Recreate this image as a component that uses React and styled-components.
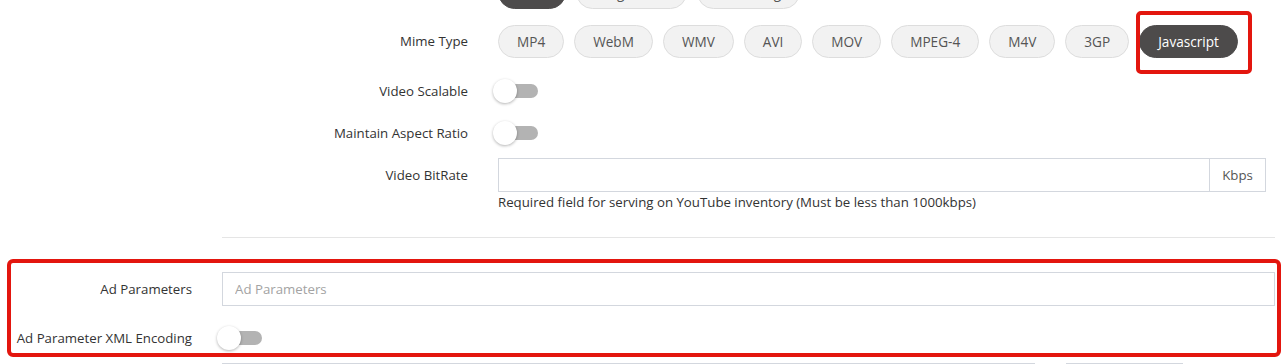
import React from 'react';
import styled, { createGlobalStyle } from 'styled-components';

const GlobalStyle = createGlobalStyle`
  body {
    margin: 0;
    background: #fff;
    font-family: "Open Sans", "Liberation Sans", sans-serif;
    font-size: 13.25px;
    color: #333;
    overflow: hidden;
  }
  * { box-sizing: border-box; }
`;

const Page = styled.div`
  margin-top: -24px;
  padding-right: 7px;
`;

const Row = styled.div`
  display: grid;
  grid-template-columns: ${p => p.$labelWidth || 192}px minmax(0, 1fr);
  column-gap: 30px;
  align-items: start;
  margin-bottom: ${p => (p.$mb === undefined ? 8 : p.$mb)}px;
  & > * { min-width: 0; }
`;

const Label = styled.div`
  text-align: right;
  line-height: ${p => p.$h || 34}px;
  white-space: nowrap;
  color: #333;
`;

const Nested = styled.div`
  padding-right: 9px;
`;

const Pills = styled.div`
  display: flex;
  flex-wrap: wrap;
  gap: 10px;
`;

const PillWrap = styled.span`
  position: relative;
  display: inline-flex;
`;

const Pill = styled.button`
  height: 33px;
  padding: 0 18px;
  border-radius: 17px;
  border: 1px solid ${p => (p.$active ? '#4d4b4b' : '#dddddd')};
  background: ${p => (p.$active ? '#4d4b4b' : '#f2f2f2')};
  color: ${p => (p.$active ? '#fff' : '#555')};
  font-family: inherit;
  font-size: 13.6px;
  cursor: pointer;
`;

const Highlight = styled.div`
  position: absolute;
  top: ${p => p.$t}px;
  left: ${p => p.$l}px;
  right: ${p => p.$r}px;
  bottom: ${p => p.$b}px;
  border: 4px solid #e3160e;
  border-radius: ${p => p.$radius || 5}px;
  pointer-events: none;
`;

const ToggleCell = styled.div`
  height: 34px;
  display: flex;
  align-items: center;
`;

const Toggle = styled.span`
  position: relative;
  display: inline-block;
  width: 45px;
  height: 24px;
  margin-left: -5px;
`;

const Track = styled.span`
  position: absolute;
  left: 12px;
  right: 0;
  top: 5px;
  height: 14px;
  border-radius: 7px;
  background: #b3b3b3;
`;

const Knob = styled.span`
  position: absolute;
  left: 0;
  top: 0;
  width: 24px;
  height: 24px;
  border-radius: 50%;
  background: #fff;
  box-shadow: 0 1px 3px rgba(0, 0, 0, 0.3);
`;

const InputGroup = styled.div`
  display: flex;
  width: 100%;
  height: 34px;
  border: 1px solid #d3d7de;
  background: #fff;
`;

const TextInput = styled.input`
  flex: 1;
  min-width: 0;
  width: 0;
  border: none;
  outline: none;
  padding: 0 12px;
  font-family: inherit;
  font-size: 13.25px;
  color: #333;
  background: transparent;
  &::placeholder { color: #a3a3a3; }
`;

const Addon = styled.span`
  flex: 0 0 56px;
  border-left: 1px solid #d3d7de;
  display: flex;
  align-items: center;
  justify-content: center;
  color: #555;
`;

const Help = styled.div`
  line-height: 20px;
  color: #333;
`;

const Divider = styled.hr`
  border: none;
  border-top: 1px solid #e5e5e5;
  margin: 25px -9px 34px 0;
`;

const Marked = styled.div`
  position: relative;
`;

const SplitInputs = styled.div`
  display: grid;
  grid-template-columns: 813px 117px;
  column-gap: 31px;
`;

const Switch = () => (
  <ToggleCell>
    <Toggle>
      <Track />
      <Knob />
    </Toggle>
  </ToggleCell>
);

const deliveryTypes = ['Both', 'Progressive', 'Streaming'];
const mimeTypes = ['MP4', 'WebM', 'WMV', 'AVI', 'MOV', 'MPEG-4', 'M4V', '3GP', 'Javascript'];

export default function App() {
  return (
    <>
      <GlobalStyle />
      <Page>
        <Row $mb={0}>
          <div />
          <Nested>
            <Row $labelWidth={246} $mb={16}>
              <Label $h={33}>Delivery Type</Label>
              <Pills>
                {deliveryTypes.map((t, i) => (
                  <Pill key={t} $active={i === 0}>{t}</Pill>
                ))}
              </Pills>
            </Row>
            <Row $labelWidth={246} $mb={16}>
              <Label $h={33}>Mime Type</Label>
              <Pills>
                {mimeTypes.map(t =>
                  t === 'Javascript' ? (
                    <PillWrap key={t}>
                      <Pill $active>{t}</Pill>
                      <Highlight $t={-14} $l={-3} $r={-14} $b={-16} />
                    </PillWrap>
                  ) : (
                    <Pill key={t}>{t}</Pill>
                  )
                )}
              </Pills>
            </Row>
            <Row $labelWidth={246}>
              <Label>Video Scalable</Label>
              <Switch />
            </Row>
            <Row $labelWidth={246}>
              <Label>Maintain Aspect Ratio</Label>
              <Switch />
            </Row>
            <Row $labelWidth={246} $mb={0}>
              <Label>Video BitRate</Label>
              <div>
                <InputGroup>
                  <TextInput />
                  <Addon>Kbps</Addon>
                </InputGroup>
                <Help>Required field for serving on YouTube inventory (Must be less than 1000kbps)</Help>
              </div>
            </Row>
            <Divider />
          </Nested>
        </Row>

        <Marked>
          <Row $mb={15}>
            <Label>Ad Parameters</Label>
            <InputGroup>
              <TextInput placeholder="Ad Parameters" />
            </InputGroup>
          </Row>
          <Row $mb={0}>
            <Label>Ad Parameter XML Encoding</Label>
            <Switch />
          </Row>
          <Highlight $t={-13} $l={7} $r={-6} $b={-2} $radius={6} />
        </Marked>

        <Row $mb={8} style={{ marginTop: 8 }}>
          <Label>Skip Offset</Label>
          <SplitInputs>
            <InputGroup />
            <InputGroup />
          </SplitInputs>
        </Row>
      </Page>
    </>
  );
}
